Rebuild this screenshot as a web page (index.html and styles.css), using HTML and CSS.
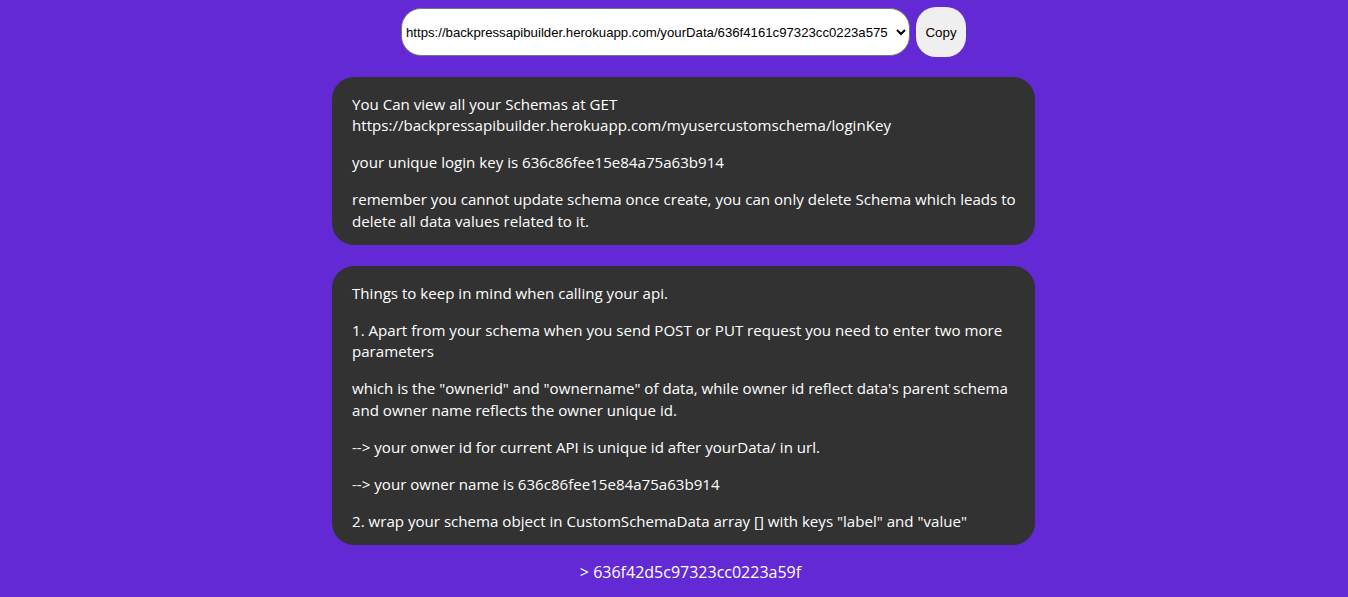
FILE: index.html
```html
<!DOCTYPE html>
<html>
<head>
<meta charset="utf-8">
<link rel="stylesheet" href="styles.css">
</head>
<body>
<div class="page">
  <div class="toolbar">
    <select class="url-select">
      <option>https://backpressapibuilder.herokuapp.com/yourData/636f4161c97323cc0223a575</option>
    </select>
    <button class="copy-btn">Copy</button>
  </div>
  <div class="card card-first">
    <p>You Can view all your Schemas at GET https://backpressapibuilder.herokuapp.com/myusercustomschema/loginKey</p>
    <p>your unique login key is 636c86fee15e84a75a63b914</p>
    <p>remember you cannot update schema once create, you can only delete Schema which leads to delete all data values related to it.</p>
  </div>
  <div class="card card-second">
    <p>Things to keep in mind when calling your api.</p>
    <p>1. Apart from your schema when you send POST or PUT request you need to enter two more parameters</p>
    <p>which is the "ownerid" and "ownername" of data, while owner id reflect data's parent schema and owner name reflects the owner unique id.</p>
    <p>--&gt; your onwer id for current API is unique id after yourData/ in url.</p>
    <p>--&gt; your owner name is 636c86fee15e84a75a63b914</p>
    <p>2. wrap your schema object in CustomSchemaData array [] with keys "label" and "value"</p>
  </div>
  <div class="item-id">&gt; 636f42d5c97323cc0223a59f</div>
</div>
</body>
</html>
```
FILE: styles.css
```css
html, body {
  margin: 0;
  padding: 0;
  background: #6229d4;
}
body {
  font-family: "Open Sans", "Noto Sans", sans-serif;
  color: #ffffff;
}
.page {
  padding-left: 19px;
  padding-top: 7px;
  display: flex;
  flex-direction: column;
  align-items: center;
}
.toolbar {
  display: flex;
  align-items: center;
  gap: 6px;
}
.url-select {
  height: 48px;
  width: 509px;
  border-radius: 20px;
  border: 1px solid #767676;
  background: #fff;
  font-family: "Liberation Sans", Arial, sans-serif;
  font-size: 13.2px;
  color: #000;
  padding: 0;
}
.copy-btn {
  height: 50px;
  width: 50px;
  border-radius: 20px;
  border: none;
  background: #efefef;
  font-family: "Liberation Sans", Arial, sans-serif;
  font-size: 13.33px;
  color: #000;
  padding: 0;
}
.card {
  box-sizing: border-box;
  width: 703px;
  background: #323232;
  border-radius: 22px;
  padding: 1px 15px 0 20px;
  font-size: 15.1px;
  line-height: 21.5px;
}
.card p {
  margin: 15.5px 0;
}
.card p:last-child {
  margin-bottom: 13px;
}
.card-first {
  margin-top: 20px;
}
.card-second {
  margin-top: 21px;
}
.item-id {
  margin-top: 16px;
  font-size: 16px;
  padding-left: 14px;
  line-height: 22px;
}
```
